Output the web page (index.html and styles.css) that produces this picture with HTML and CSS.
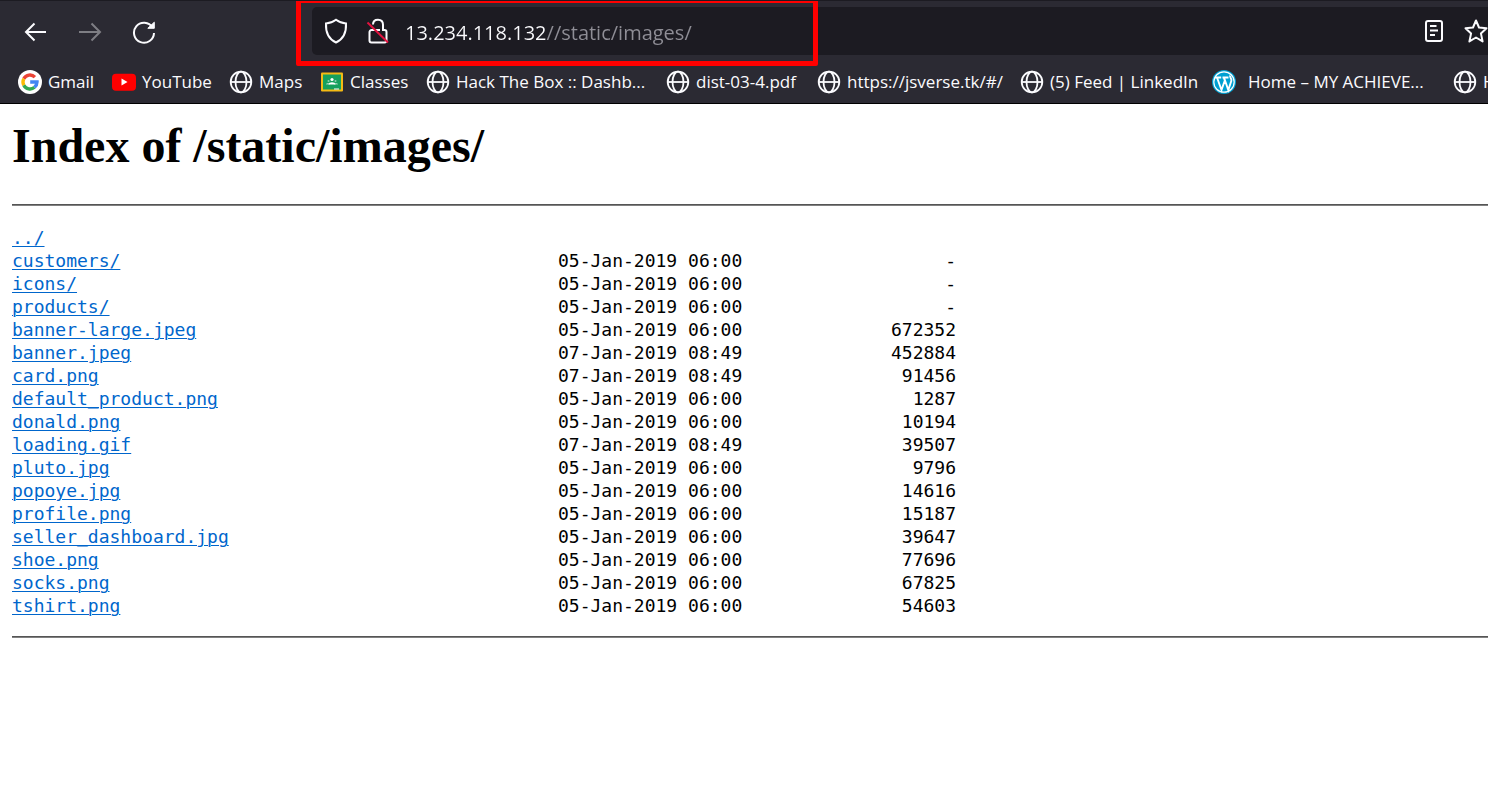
FILE: index.html
```html
<!DOCTYPE html>
<html lang="en">
<head>
<meta charset="utf-8">
<title>Index of /static/images/</title>
<link rel="stylesheet" href="styles.css">
</head>
<body>
<svg class="sprite" aria-hidden="true">
  <symbol id="globe" viewBox="0 0 24 24"><g fill="none" stroke="#fbfbfe" stroke-width="1.8"><circle cx="12" cy="12" r="10.3"/><ellipse cx="12" cy="12" rx="5.500" ry="10.3"/><path d="M2 12h20"/></g></symbol>
</svg>
<header class="browser">
  <div class="toolbar">
    <div class="nav">
      <button type="button" aria-label="Back"><svg width="24" height="24" viewBox="0 0 24 24"><path d="M22 12H2.500M10.500 3.500L2 12l8.500 8.500"/></svg></button>
      <button type="button" aria-label="Forward" disabled><svg width="24" height="24" viewBox="0 0 24 24"><path d="M1 12h20.500M13.500 3.500L22 12l-8.500 8.500"/></svg></button>
      <button type="button" aria-label="Reload"><svg width="24" height="24" viewBox="0 0 24 24"><path d="M20.500 7.500A10 10 0 1 0 22 13"/><path d="M22.300 2.200v6.100h-6.500z" fill="#fbfbfe" stroke-width="1"/></svg></button>
    </div>
    <div class="urlbar">
      <svg width="24" height="26" viewBox="0 0 24 26"><path d="M12 1.800c3 2.300 6 3.400 10 3.700 .4 8-2.500 15.500-10 19C4.500 21 1.600 13.500 2 5.500c4-.3 7-1.400 10-3.700z"/></svg>
      <svg class="lock" width="24" height="26" viewBox="0 0 24 26"><path d="M7 6.500C7 3.500 9 1.700 12 1.700s5 2 5 5V12h1.500a2 2 0 0 1 2 2v8.500a2 2 0 0 1-2 2h-13a2 2 0 0 1-2-2V14a2 2 0 0 1 2-2H14"/><path class="slash" d="M1.500 4.500l20.500 20"/></svg>
      <input class="address" type="text" aria-label="Address" value="13.234.118.132//static/images/">
      <button type="button" aria-label="Reader view"><svg width="24" height="24" viewBox="0 0 24 24"><rect x="4" y="2" width="16" height="20" rx="2"/><path d="M8 7h6.500M8 11.500h8M8 16h5"/></svg></button>
      <button type="button" aria-label="Bookmark this page"><svg width="24" height="24" viewBox="0 0 24 24"><path stroke-linejoin="round" d="M12 1.500l3 7 7.500.7-5.600 5.200 1.700 8L12 18.500l-6.600 3.900 1.700-8L1.500 9.200 9 8.500z"/></svg></button>
    </div>
  </div>
  <nav class="bookmarks" aria-label="Bookmarks">
    <a href="#"><svg viewBox="0 0 24 24"><circle cx="12" cy="12" r="12" fill="#fff"/><g fill="none" stroke-width="3.400"><path stroke="#ea4335" d="M5.800 8.800a7 7 0 0 1 11.100-1.700"/><path stroke="#fbbc05" d="M5.800 15.200a7 7 0 0 1 0-6.400"/><path stroke="#34a853" d="M16.500 17.300a7 7 0 0 1-10.700-2.100"/><path stroke="#4285f4" d="M12.200 12H19a7 7 0 0 1-2.500 5.300"/></g></svg><span>Gmail</span></a>
    <a href="#"><svg viewBox="0 0 24 24"><rect y="3.700" width="24" height="17" rx="4" fill="#f00"/><path d="M9.500 8.500v7l6-3.500z" fill="#fff"/></svg><span>YouTube</span></a>
    <a href="#"><svg><use href="#globe"/></svg><span>Maps</span></a>
    <a href="#"><svg viewBox="0 0 24 24"><rect x="1" y="2.500" width="22" height="19" rx="1" fill="#f5ba14"/><rect x="3" y="4.500" width="18" height="15" fill="#16a05d"/><circle cx="12" cy="9.500" r="1.600" fill="#fff"/><g fill="#8fd0ae"><circle cx="8.500" cy="11" r="1"/><circle cx="15.500" cy="11" r="1"/><path d="M6 14.500c0-2 3.500-2 4 0h4c.5-2 4-2 4 0z"/></g><path d="M8.500 14.500c0-3 7-3 7 0z" fill="#fff"/><path d="M14 18.500h5v1h-5z" fill="#fff"/></svg><span>Classes</span></a>
    <a href="#"><svg><use href="#globe"/></svg><span>Hack The Box :: Dashb...</span></a>
    <a href="#"><svg><use href="#globe"/></svg><span>dist-03-4.pdf</span></a>
    <a href="#"><svg><use href="#globe"/></svg><span>https://jsverse.tk/#/</span></a>
    <a href="#"><svg><use href="#globe"/></svg><span>(5) Feed | LinkedIn</span></a>
    <a class="wide" href="#"><svg viewBox="0 0 24 24"><circle cx="12" cy="12" r="12" fill="#00a0d2"/><circle cx="12" cy="12" r="10.200" fill="none" stroke="#fff" stroke-width="1.200"/><path d="M3 7.500h6.200M10.500 7.500h6M5 7.500l4.500 12.500 3.300-9.500-1-3M12.500 9l3.800 11 3-9c.8-2.500-2-3.500-1-5.500" fill="none" stroke="#fff" stroke-width="1.900"/></svg><span>Home – MY ACHIEVE...</span></a>
    <a href="#"><svg><use href="#globe"/></svg><span>H</span></a>
  </nav>
  <div class="highlight"></div>
</header>
<main>
  <h1>Index of /static/images/</h1>
  <hr>
  <table aria-label="Directory listing">
    <colgroup><col class="name"><col class="date"><col class="size"></colgroup>
    <tbody>
    <tr><td><a href="#">../</a></td><td></td><td></td></tr>
    <tr><td><a href="#">customers/</a></td><td>05-Jan-2019 06:00</td><td>-</td></tr>
    <tr><td><a href="#">icons/</a></td><td>05-Jan-2019 06:00</td><td>-</td></tr>
    <tr><td><a href="#">products/</a></td><td>05-Jan-2019 06:00</td><td>-</td></tr>
    <tr><td><a href="#">banner-large.jpeg</a></td><td>05-Jan-2019 06:00</td><td>672352</td></tr>
    <tr><td><a href="#">banner.jpeg</a></td><td>07-Jan-2019 08:49</td><td>452884</td></tr>
    <tr><td><a href="#">card.png</a></td><td>07-Jan-2019 08:49</td><td>91456</td></tr>
    <tr><td><a href="#">default_product.png</a></td><td>05-Jan-2019 06:00</td><td>1287</td></tr>
    <tr><td><a href="#">donald.png</a></td><td>05-Jan-2019 06:00</td><td>10194</td></tr>
    <tr><td><a href="#">loading.gif</a></td><td>07-Jan-2019 08:49</td><td>39507</td></tr>
    <tr><td><a href="#">pluto.jpg</a></td><td>05-Jan-2019 06:00</td><td>9796</td></tr>
    <tr><td><a href="#">popoye.jpg</a></td><td>05-Jan-2019 06:00</td><td>14616</td></tr>
    <tr><td><a href="#">profile.png</a></td><td>05-Jan-2019 06:00</td><td>15187</td></tr>
    <tr><td><a href="#">seller_dashboard.jpg</a></td><td>05-Jan-2019 06:00</td><td>39647</td></tr>
    <tr><td><a href="#">shoe.png</a></td><td>05-Jan-2019 06:00</td><td>77696</td></tr>
    <tr><td><a href="#">socks.png</a></td><td>05-Jan-2019 06:00</td><td>67825</td></tr>
    <tr><td><a href="#">tshirt.png</a></td><td>05-Jan-2019 06:00</td><td>54603</td></tr>
    </tbody>
  </table>
  <hr>
</main>
</body>
</html>
```
FILE: styles.css
```css
* { box-sizing: border-box; }
body { margin: 0; background: #fff; color: #000; overflow-x: hidden; }
.sprite { position: absolute; width: 0; height: 0; }

.browser {
  position: relative;
  overflow: hidden;
  background: #2b2a33;
  border-top: 1px solid #1c1b22;
  border-bottom: 1px solid #000;
  font-family: "Open Sans", "Noto Sans", sans-serif;
  color: #fbfbfe;
}
.toolbar { display: flex; align-items: center; padding: 6px 0; }
.nav { display: flex; gap: 30px; width: 312px; padding: 2px 0 0 24px; }
button { display: flex; flex: none; padding: 0; border: 0; background: none; }
.toolbar svg { display: block; flex: none; fill: none; stroke: #fbfbfe; stroke-width: 2; }
button:disabled svg { opacity: .4; }
.urlbar {
  display: flex;
  align-items: center;
  flex: 1;
  min-width: 0;
  height: 48px;
  padding-left: 12px;
  background: #1c1b22;
  border-radius: 5px 0 0 5px;
}
.urlbar .lock { margin: 0 15px 0 18px; }
.urlbar .slash { stroke: #e2123f; }
.urlbar button { margin-right: 18px; }
.urlbar button:last-child { margin-right: 0; }
.address {
  flex: 1;
  min-width: 0;
  height: 34px;
  padding: 3px 0 0;
  border: 0;
  outline: 0;
  font: 20px/30px "Open Sans", "Noto Sans", sans-serif;
  color: transparent;
  background: linear-gradient(90deg, #fbfbfe 141px, #8f8e96 141px);
  -webkit-background-clip: text;
  background-clip: text;
}

.bookmarks {
  display: grid;
  grid-template-columns: 94px 117px 91px 106px 240px 151px 203px 192px 241px 1fr;
  padding: 5px 0 5px 18px;
}
.bookmarks a {
  display: flex;
  gap: 6px;
  align-items: center;
  height: 32px;
  min-width: 0;
  font-size: 17px;
  line-height: 24px;
  white-space: nowrap;
  color: #fbfbfe;
  text-decoration: none;
}
.bookmarks .wide { gap: 12px; }
.bookmarks svg { width: 24px; height: 24px; flex: none; }

.highlight {
  position: absolute;
  top: -3px;
  left: 296px;
  width: 522px;
  height: 68px;
  border: 5px solid #f00;
  border-radius: 2px;
  pointer-events: none;
}

main { padding-left: 12px; }
h1 { margin: 0; padding: 14px 0 30px; font: bold 48px/56px "Liberation Serif", serif; }
hr { height: 2px; margin: 0; border: 0; border-top: 1px solid #555; background: #808080; }
table {
  margin: 20px 0 19px;
  border-collapse: collapse;
  table-layout: fixed;
  width: 944px;
  font: 18px/23px "DejaVu Sans Mono", monospace;
}
.name { width: 546px; }
.date { width: 190px; }
td { padding: 0; white-space: nowrap; height: 23px; }
td:last-child { text-align: right; }
td a { color: #0066cc; text-decoration: underline; text-decoration-thickness: 1px; text-underline-offset: 2px; }
```
